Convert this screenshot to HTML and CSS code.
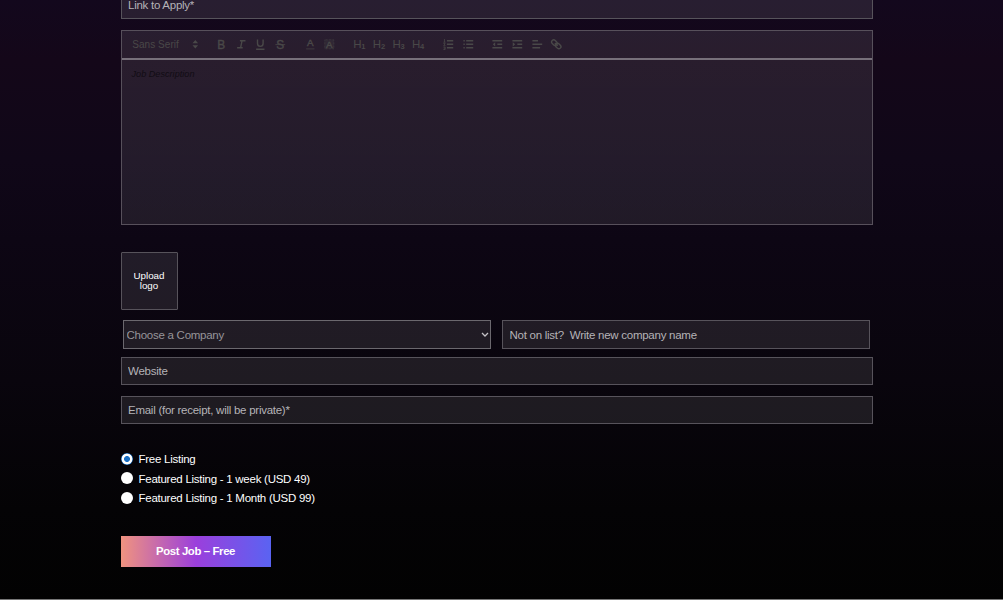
FILE: index.html
```
<!DOCTYPE html>
<html lang="en">
<head>
  <meta charset="UTF-8" />
  <title>Post a Job</title>
  <link rel="stylesheet" href="styles.css">
</head>
<body>
  <form id="jobForm" class="job-form">
    <input class="field link" type="text" name="link" placeholder="Link to Apply*" />

    <div class="editor">
      <div class="toolbar">
        <div class="picker">
          <span>Sans Serif</span>
          <svg viewBox="0 0 18 18"><polygon points="5 7.5 9 3 13 7.5"/><polygon points="5 10.5 9 15 13 10.5"/></svg>
        </div>
        <div class="group">
          <svg viewBox="0 0 18 18"><text x="9" y="15">B</text></svg>
          <svg viewBox="0 0 18 18"><path d="M7 4h8M3 14h8M8 14l2-10"/></svg>
          <svg viewBox="0 0 18 18"><path d="M5 2v6a4 4 0 0 0 8 0V2M3 16h12"/></svg>
          <svg viewBox="0 0 18 18"><text x="9" y="15">S</text><path class="thin" d="M2 9.5h14"/></svg>
        </div>
        <div class="group">
          <svg viewBox="0 0 18 18"><text class="small" x="9" y="12">A</text><path class="faint" d="M3 15.5h12"/></svg>
          <svg viewBox="0 0 18 18"><rect class="dots" x="2.5" y="2.5" width="13" height="13"/><text class="small" x="9" y="14">A</text></svg>
        </div>
        <div class="group">
          <span class="head">H<small>1</small></span>
          <span class="head">H<small>2</small></span>
          <span class="head">H<small>3</small></span>
          <span class="head">H<small>4</small></span>
        </div>
        <div class="group">
          <svg viewBox="0 0 18 18"><path d="M7 4h9M7 9h9M7 14h9"/><path class="thin" d="M3.5 1.5v4.5M2 6h3M2 8h2.5l-2 3h2.5M2 13h2.5v3.5h-2.5M2.5 14.5h2"/></svg>
          <svg viewBox="0 0 18 18"><path d="M6 4h10M6 9h10M6 14h10M2 4h2M2 9h2M2 14h2"/></svg>
        </div>
        <div class="group">
          <svg viewBox="0 0 18 18"><path d="M2 14h14M2 4h14M9 9h7"/><polygon points="6 6 6 12 2.5 9"/></svg>
          <svg viewBox="0 0 18 18"><path d="M2 14h14M2 4h14M9 9h7"/><polygon points="2.5 6 2.5 12 6 9"/></svg>
          <svg viewBox="0 0 18 18"><path d="M2 9h14M2 14h11M2 4h8"/></svg>
          <svg viewBox="0 0 18 18"><path d="M7 7l4 4"/><rect x="2" y="3.5" width="8.5" height="6" rx="3" transform="rotate(45 6.2 6.5)"/><rect x="7.5" y="8.5" width="8.5" height="6" rx="3" transform="rotate(45 11.8 11.5)"/></svg>
        </div>
      </div>
      <div class="editor-text">Job Description</div>
    </div>

    <button type="button" class="upload">Upload logo</button>

    <div class="company">
      <div class="select-wrap">
        <select class="field" name="company">
          <option>Choose a Company</option>
        </select>
        <svg viewBox="0 0 8 6"><path d="M1 1l3 3 3-3"/></svg>
      </div>
      <input class="field" type="text" name="newCompany" placeholder="Not on list?  Write new company name" />
    </div>
    <input class="field website" type="text" name="website" placeholder="Website" />
    <input class="field email" type="text" name="email" placeholder="Email (for receipt, will be private)*" />

    <div class="plans">
      <label><input type="radio" name="plan" checked /><span>Free Listing</span></label>
      <label><input type="radio" name="plan" /><span>Featured Listing - 1 week (USD 49)</span></label>
      <label><input type="radio" name="plan" /><span>Featured Listing - 1 Month (USD 99)</span></label>
    </div>

    <button type="submit" class="submit">Post Job – Free</button>
  </form>
</body>
</html>
```

FILE: styles.css
```
* {
  box-sizing: border-box;
}

body {
  margin: 0;
  height: 600px;
  overflow: hidden;
  font-family: "Liberation Sans", Arial, sans-serif;
  font-size: 11.5px;
  letter-spacing: -0.26px;
  color: #fff;
  background: linear-gradient(#13081d 0, #140719 60px, #100718 160px, #0d0614 240px, #09050d 380px, #040305 510px, #020202 600px);
  border-bottom: 1px solid #777;
}

.job-form {
  display: flex;
  flex-direction: column;
  width: 752px;
  margin-left: 120.5px;
}

.field {
  width: 100%;
  height: 28px;
  padding: 0 6.5px;
  border: 1px solid #57535b;
  border-radius: 0;
  background: rgba(255, 255, 255, 0.09);
  font: inherit;
  letter-spacing: inherit;
  color: #b5b3b7;
  outline: none;
}

.field::placeholder {
  color: #b5b3b7;
  opacity: 1;
}

.link {
  margin-top: -9px;
}

.editor {
  height: 195px;
  margin-top: 11px;
  border: 1px solid #57505b;
  background: linear-gradient(rgba(255, 255, 255, 0.09), rgba(255, 255, 255, 0.08));
}

.toolbar {
  display: flex;
  align-items: center;
  height: 29px;
  padding-left: 5.6px;
  border-bottom: 2px solid #77707a;
  color: #494848;
}

.picker {
  display: flex;
  align-items: center;
  justify-content: space-between;
  width: 75px;
  padding-left: 5.2px;
  margin-right: 9.5px;
  font-size: 10px;
  letter-spacing: 0.05px;
}

.picker svg {
  margin-right: 1px;
}

.group {
  display: flex;
  margin-right: 10.3px;
}

.toolbar svg {
  width: 12.6px;
  height: 12.6px;
  fill: none;
  stroke: currentColor;
  stroke-width: 2;
}

.group svg {
  margin: 0 3.5px;
}

.toolbar svg text {
  font-size: 17px;
  letter-spacing: 0;
  text-anchor: middle;
  fill: currentColor;
  stroke: currentColor;
  stroke-width: 0.6;
}

.toolbar svg .small {
  font-size: 14px;
}

.toolbar svg .faint {
  opacity: 0.5;
}

.toolbar svg .thin {
  stroke-width: 1.2;
}

.toolbar svg .dots {
  stroke-width: 1;
  stroke-dasharray: 1 1;
  fill: rgba(72, 72, 72, 0.25);
}

.toolbar polygon {
  fill: currentColor;
  stroke: none;
}

.head {
  width: 19.6px;
  padding-left: 3.5px;
  font-size: 11.5px;
  line-height: 14px;
}

.head small {
  position: relative;
  top: 1px;
  font-size: 7.5px;
  font-weight: bold;
}

.editor-text {
  padding: 8px 10px;
  font-size: 9.1px;
  font-style: italic;
  line-height: 13px;
  letter-spacing: 0.02px;
  color: #110c14;
}

.upload {
  width: 57px;
  height: 58px;
  margin-top: 27px;
  padding: 0 10px;
  border: 1px solid #57535b;
  border-radius: 1px;
  background: rgba(255, 255, 255, 0.09);
  font-family: inherit;
  font-size: 9.8px;
  line-height: 10.5px;
  color: #fff;
}

.company {
  display: grid;
  grid-template-columns: 1fr 1fr;
  gap: 11px;
  margin: 10px 2.5px 0;
}

.company .field {
  display: block;
  height: 29px;
}

.select-wrap {
  position: relative;
}

.select-wrap svg {
  position: absolute;
  top: 12px;
  right: 2px;
  width: 8px;
  height: 6px;
  fill: none;
  stroke: #c4c2c6;
  stroke-width: 1.3;
}

select.field {
  appearance: none;
  padding: 0 2.5px;
  border-color: #6b686e;
  color: #97959a;
}

.website {
  margin-top: 8px;
}

.email {
  margin-top: 11px;
}

.plans {
  margin-top: 25.5px;
}

.plans label {
  display: flex;
  align-items: center;
  gap: 6px;
  height: 19.5px;
}

.plans input {
  appearance: none;
  width: 12px;
  height: 12px;
  margin: 0 0 1px;
  border-radius: 50%;
  background: #fff;
}

.plans input:checked {
  background: radial-gradient(circle, #1a6fc4 2.6px, #fff 3.3px, #fff 5px, #1a6fc4 5.8px);
}

.submit {
  width: 150px;
  height: 31px;
  margin-top: 27.5px;
  border: none;
  background: linear-gradient(90deg, #f0937f, #9b3fdc 50%, #5a63f2);
  font-family: inherit;
  font-size: 11.4px;
  font-weight: bold;
  letter-spacing: -0.38px;
  color: #fff;
}
```
